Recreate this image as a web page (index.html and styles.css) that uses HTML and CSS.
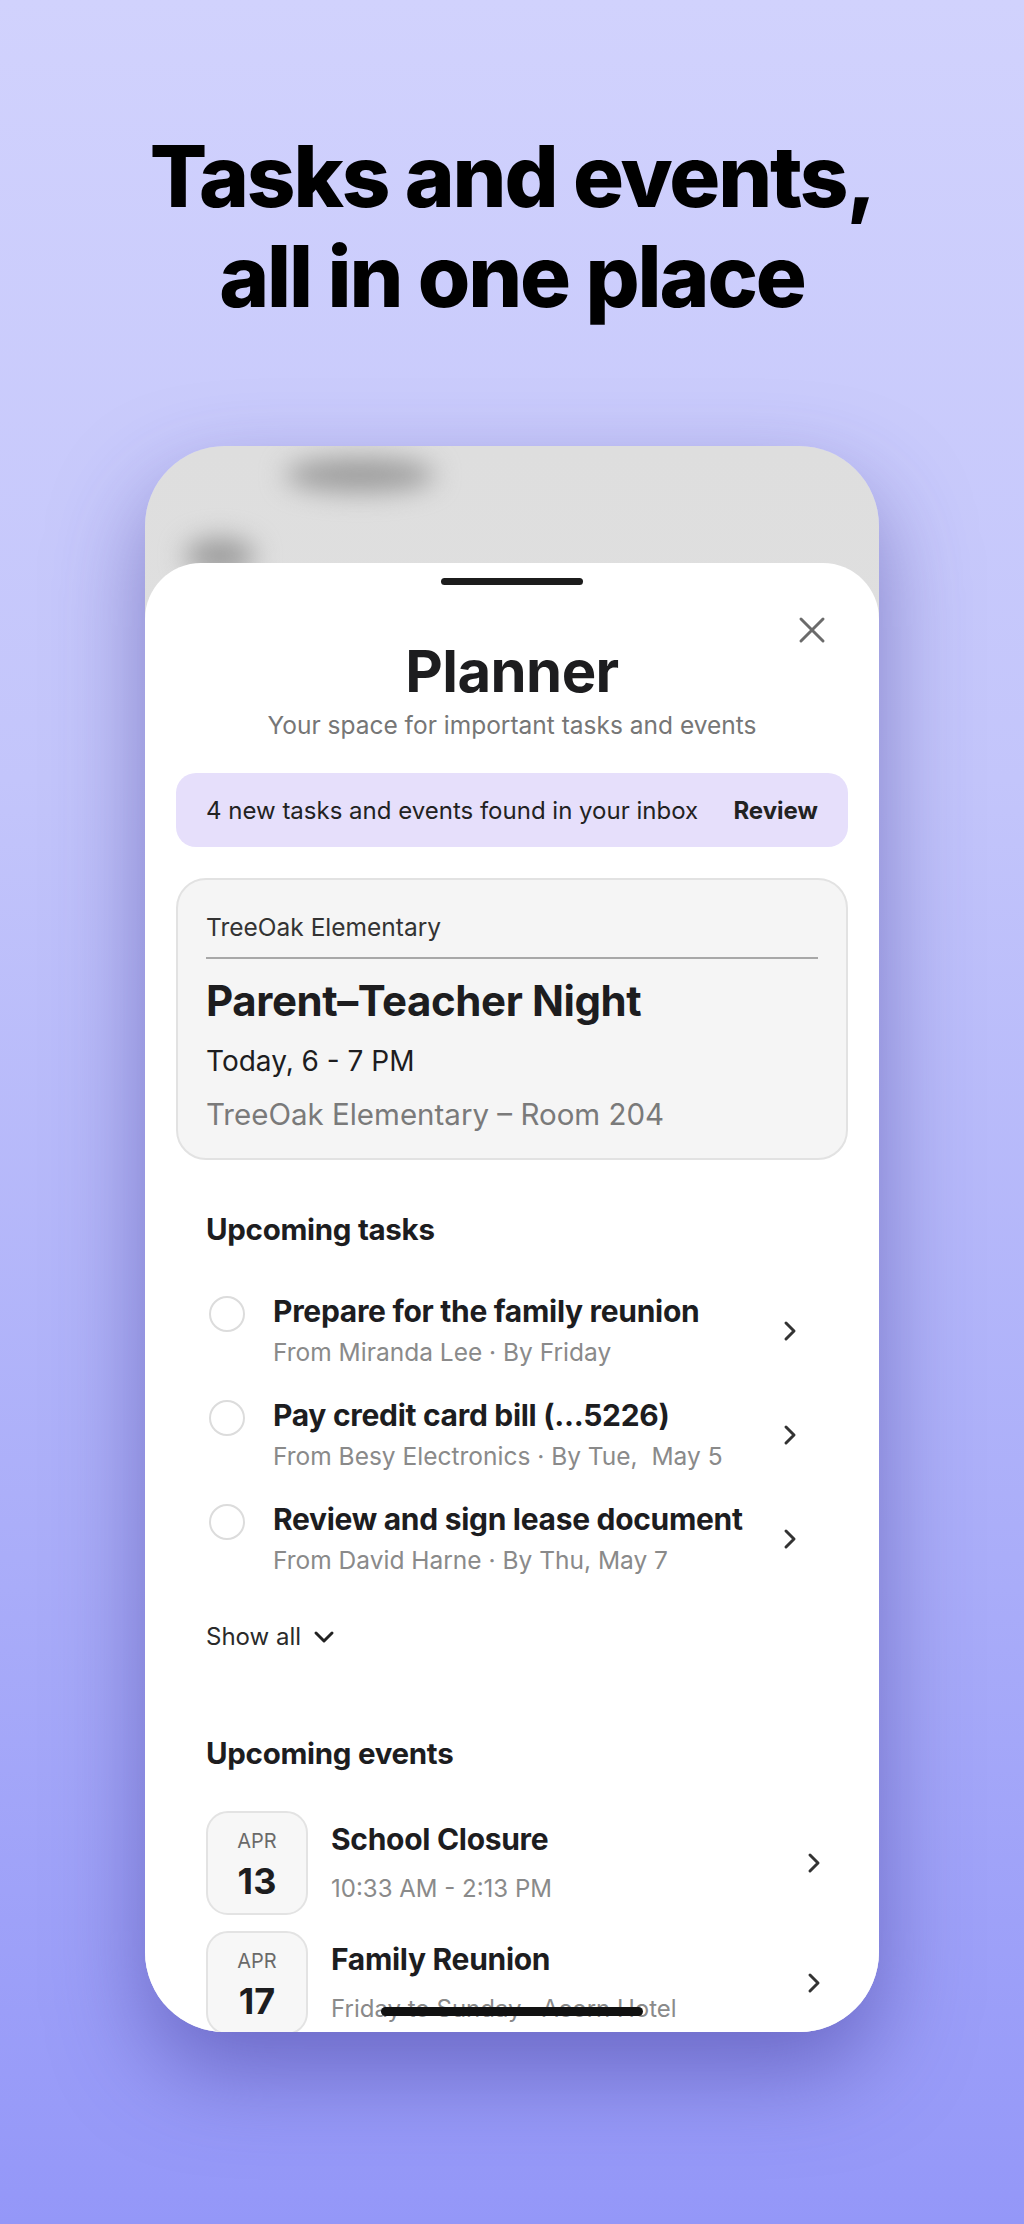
FILE: index.html
```html
<!DOCTYPE html>
<html lang="en">
<head>
  <meta charset="utf-8">
  <meta name="viewport" content="width=device-width, initial-scale=1">
  <title>Planner</title>
  <link rel="stylesheet" href="styles.css">
</head>
<body>
  <h1 class="headline">Tasks and events,<br>all in one place</h1>

  <div class="phone">
    <div class="backdrop">
      <span class="blob blob-a"></span>
      <span class="blob blob-b"></span>
    </div>

    <div class="sheet">
      <div class="handle"></div>
      <svg class="close" width="28" height="28" viewBox="0 0 28 28">
        <path d="M3 3 L25 25 M25 3 L3 25" stroke="#6b6b6b" stroke-width="3" stroke-linecap="round" fill="none"/>
      </svg>

      <h2 class="title">Planner</h2>
      <p class="subtitle">Your space for important tasks and events</p>

      <div class="banner">
        <span>4 new tasks and events found in your inbox</span>
        <b>Review</b>
      </div>

      <div class="card">
        <div class="card-org">TreeOak Elementary</div>
        <div class="card-rule"></div>
        <div class="card-title">Parent–Teacher Night</div>
        <div class="card-time">Today, 6 - 7 PM</div>
        <div class="card-place">TreeOak Elementary – Room 204</div>
      </div>

      <div class="section">
        <h3 class="section-title">Upcoming tasks</h3>
        <ul class="tasks">
          <li class="task">
            <span class="check"></span>
            <div>
              <div class="item-title">Prepare for the family reunion</div>
              <div class="item-sub">From Miranda Lee · By Friday</div>
            </div>
            <svg class="chev" width="14" height="22" viewBox="0 0 14 22"><path d="M3 3 L11 11 L3 19" stroke="#333" stroke-width="3" stroke-linecap="round" stroke-linejoin="round" fill="none"/></svg>
          </li>
          <li class="task">
            <span class="check"></span>
            <div>
              <div class="item-title">Pay credit card bill (...5226)</div>
              <div class="item-sub">From Besy Electronics · By Tue,&nbsp; May 5</div>
            </div>
            <svg class="chev" width="14" height="22" viewBox="0 0 14 22"><path d="M3 3 L11 11 L3 19" stroke="#333" stroke-width="3" stroke-linecap="round" stroke-linejoin="round" fill="none"/></svg>
          </li>
          <li class="task">
            <span class="check"></span>
            <div>
              <div class="item-title">Review and sign lease document</div>
              <div class="item-sub">From David Harne · By Thu, May 7</div>
            </div>
            <svg class="chev" width="14" height="22" viewBox="0 0 14 22"><path d="M3 3 L11 11 L3 19" stroke="#333" stroke-width="3" stroke-linecap="round" stroke-linejoin="round" fill="none"/></svg>
          </li>
        </ul>
        <div class="show-all">
          Show all
          <svg width="22" height="14" viewBox="0 0 22 14"><path d="M3 3 L11 11 L19 3" stroke="#222" stroke-width="3" stroke-linecap="round" stroke-linejoin="round" fill="none"/></svg>
        </div>
      </div>

      <div class="section">
        <h3 class="section-title events-title">Upcoming events</h3>
        <ul class="events">
          <li class="event">
            <div class="date"><span class="month">APR</span><span class="day">13</span></div>
            <div>
              <div class="item-title">School Closure</div>
              <div class="item-sub">10:33 AM - 2:13 PM</div>
            </div>
            <svg class="chev" width="14" height="22" viewBox="0 0 14 22"><path d="M3 3 L11 11 L3 19" stroke="#333" stroke-width="3" stroke-linecap="round" stroke-linejoin="round" fill="none"/></svg>
          </li>
          <li class="event">
            <div class="date"><span class="month">APR</span><span class="day">17</span></div>
            <div>
              <div class="item-title">Family Reunion</div>
              <div class="item-sub">Friday to Sunday · Acorn Hotel</div>
            </div>
            <svg class="chev" width="14" height="22" viewBox="0 0 14 22"><path d="M3 3 L11 11 L3 19" stroke="#333" stroke-width="3" stroke-linecap="round" stroke-linejoin="round" fill="none"/></svg>
          </li>
        </ul>
      </div>
    </div>

    <div class="home-bar"></div>
  </div>
</body>
</html>
```

FILE: styles.css
```css
body {
  margin: 0;
  height: 2224px;
  overflow: hidden;
  font-family: Inter, "Noto Sans", sans-serif;
  color: #1d1d1f;
  background: linear-gradient(180deg, #d1d2fd 0%, #c3c5fb 35%, #aaadf9 70%, #9497f8 100%);
}
.headline {
  margin: 0;
  padding-top: 127px;
  font-size: 85px;
  line-height: 100px;
  font-weight: 800;
  letter-spacing: -0.025em;
  text-align: center;
  color: #000;
}

.phone {
  position: relative;
  width: 734px;
  height: 1586px;
  margin: 119px auto 0;
  border-radius: 80px;
  overflow: hidden;
  background: linear-gradient(180deg, #dedede, #e6e6e6);
  box-shadow: 0 40px 90px rgba(62, 54, 150, 0.5);
}
.backdrop {
  position: relative;
  height: 117px;
}
.blob {
  position: absolute;
  background: #9c9c9c;
  border-radius: 50%;
  filter: blur(13px);
}
.blob-a { left: 140px; top: 12px; width: 150px; height: 34px; }
.blob-b { left: 40px; top: 92px; width: 70px; height: 36px; }

.sheet {
  position: relative;
  background: #fff;
  border-radius: 56px 56px 0 0;
  padding: 15px 31px 0;
}
.handle {
  width: 142px;
  height: 7px;
  border-radius: 4px;
  background: #1c1c1c;
  margin: 0 auto;
}
.close {
  position: absolute;
  left: 653px;
  top: 53px;
}
.title {
  margin: 51px 0 0;
  font-size: 58px;
  line-height: 70px;
  font-weight: 700;
  letter-spacing: -0.01em;
  text-align: center;
}
.subtitle {
  margin: 4px 0 0;
  font-size: 24.5px;
  line-height: 30px;
  color: #767676;
  text-align: center;
}

.banner {
  margin-top: 33px;
  height: 74px;
  padding: 0 30px;
  border-radius: 20px;
  background: #e6dffb;
  display: flex;
  align-items: center;
  justify-content: space-between;
  font-size: 24px;
  color: #222;
}
.banner b { font-weight: 700; }

.card {
  margin-top: 31px;
  height: 282px;
  box-sizing: border-box;
  padding: 32px 28px 0;
  border: 2px solid #e2e2e2;
  border-radius: 30px;
  background: #f5f5f5;
}
.card-org {
  font-size: 24.5px;
  line-height: 30px;
  color: #333;
}
.card-rule {
  height: 2px;
  margin-top: 15px;
  background: #a8a8a8;
}
.card-title {
  margin-top: 18px;
  font-size: 42px;
  line-height: 48px;
  font-weight: 700;
  letter-spacing: -0.01em;
}
.card-time {
  margin-top: 18px;
  font-size: 28px;
  line-height: 36px;
  color: #1d1d1f;
}
.card-place {
  margin-top: 17px;
  font-size: 29.5px;
  line-height: 36px;
  color: #7a7a7a;
}

.section { padding: 0 30px; }
.section-title {
  margin: 51px 0 0;
  font-size: 29.5px;
  line-height: 36px;
  font-weight: 700;
  letter-spacing: -0.01em;
}
.events-title { margin-top: 83px; }

.tasks, .events {
  list-style: none;
  margin: 0;
  padding: 0;
}
.tasks { margin-top: 47px; }
.task {
  display: grid;
  grid-template-columns: 36px 1fr 14px;
  column-gap: 28px;
  align-items: center;
  padding: 0 21px 0 3px;
  margin-bottom: 31px;
}
.task:last-child { margin-bottom: 0; }
.check {
  align-self: start;
  margin-top: 2px;
  width: 36px;
  height: 36px;
  box-sizing: border-box;
  border: 2.5px solid #dcdcdc;
  border-radius: 50%;
}
.item-title {
  font-size: 30px;
  line-height: 34px;
  font-weight: 700;
  letter-spacing: -0.01em;
}
.item-sub {
  margin-top: 9px;
  font-size: 24.5px;
  line-height: 30px;
  color: #8a8a8a;
}
.show-all {
  margin-top: 47px;
  display: flex;
  align-items: center;
  gap: 12px;
  font-size: 24px;
  line-height: 30px;
  color: #2a2a2a;
}

.events { margin-top: 40px; }
.event {
  display: grid;
  grid-template-columns: 102px 1fr 14px;
  column-gap: 23px;
  align-items: center;
  margin: 0 -3px 16px 0;
}
.event .item-sub {
  margin-top: 18px;
  font-size: 24px;
}
.date {
  height: 104px;
  box-sizing: border-box;
  border: 2px solid #e3e3e3;
  border-radius: 22px;
  background: #f7f7f7;
  display: flex;
  flex-direction: column;
  align-items: center;
  padding-top: 16px;
}
.month {
  font-size: 20px;
  line-height: 24px;
  color: #6a6a6a;
}
.day {
  margin-top: 8px;
  font-size: 36px;
  line-height: 40px;
  font-weight: 700;
}

.home-bar {
  position: absolute;
  left: 50%;
  bottom: 16px;
  width: 262px;
  height: 9px;
  margin-left: -131px;
  border-radius: 5px;
  background: #111;
}
```
